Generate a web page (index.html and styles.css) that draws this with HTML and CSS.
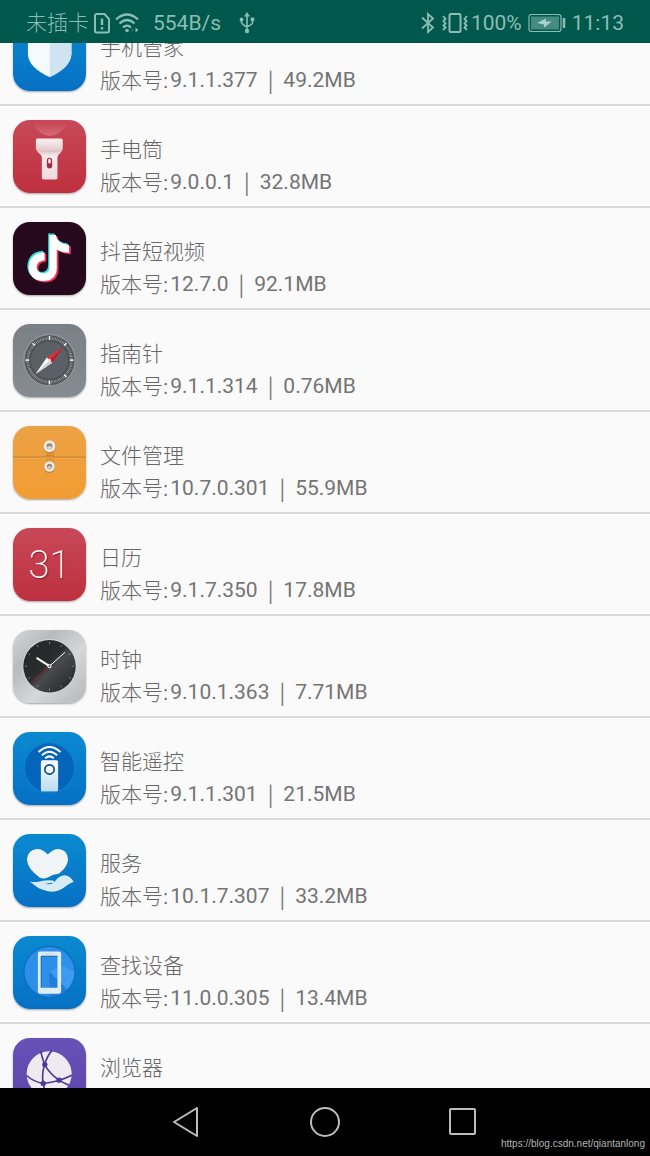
FILE: index.html
```html
<!DOCTYPE html>
<html lang="zh-CN">
<head>
  <meta charset="UTF-8" />
  <meta name="viewport" content="width=device-width, initial-scale=1.0"/>
  <title>应用列表</title>
  <link rel="stylesheet" href="styles.css">
</head>
<body>

<header class="status-bar">
  <div class="status-left">
    <span class="cjk">未插卡</span>
    <svg class="sim" width="18" height="22" viewBox="0 0 18 22" fill="none" stroke="currentColor" stroke-width="2">
      <path d="M4 2H11.500L16 7V19Q16 20.500 14.500 20.500H3.500Q2 20.500 2 19V3.500Q2 2 4 2Z"/>
      <path d="M9 6.500V13M9 15V17.500" stroke-width="2.400"/>
    </svg>
    <svg class="wifi" width="26" height="22" viewBox="0 0 26 22" fill="none" stroke="currentColor" stroke-width="2.200">
      <path d="M1 7.500Q12 -2.500 23 7.500M4.500 11.500Q12 4.500 19.500 11.500M8 15.500Q12 11.500 16 15.500"/>
      <circle cx="12" cy="18.500" r="1.800" fill="currentColor" stroke="none"/>
      <path d="M18 16V20L16.500 18Z" fill="currentColor" stroke="none" opacity="0.400"/>
      <path d="M20.500 15.500V20.500L23.500 18Z" fill="currentColor" stroke="none"/>
    </svg>
    <span class="speed">554B/s</span>
    <svg class="usb" width="16" height="22" viewBox="0 0 16 22" fill="none" stroke="currentColor" stroke-width="1.600">
      <path d="M8 3V19M2.500 7.500V10.500Q2.500 12 8 15M13.500 8V11Q13.500 12.500 8 14.500"/>
      <path d="M8 0L11 4.500H5Z" fill="currentColor" stroke="none"/>
      <circle cx="8" cy="19" r="2.200" fill="currentColor" stroke="none"/>
      <circle cx="2.500" cy="7.500" r="1.900" fill="currentColor" stroke="none"/>
      <path d="M11.700 5.500H15.300V9H11.700Z" fill="currentColor" stroke="none"/>
    </svg>
  </div>
  <div class="status-right">
    <svg width="14" height="22" viewBox="0 0 14 22" fill="none" stroke="currentColor" stroke-width="1.800">
      <path d="M1 5.500L12 15.500L7 20V2L12 6.500L1 16.500"/>
    </svg>
    <svg class="vibrate" width="28" height="22" viewBox="0 0 28 22" fill="none" stroke="currentColor" stroke-width="2">
      <rect x="8.500" y="2" width="11" height="18" rx="1.500"/>
      <path d="M2 4L4.500 7L2.500 9L4.500 11.500L2.500 13.500L4.500 15.500L2 18M26 4L23.500 7L25.500 9L23.500 11.500L25.500 13.500L23.500 15.500L26 18" stroke-width="1.800"/>
    </svg>
    <span>100%</span>
    <svg class="battery" width="38" height="20" viewBox="0 0 38 20" fill="none" stroke="currentColor">
      <rect x="1" y="1.500" width="32" height="17" rx="2.500" stroke-width="1.200"/>
      <rect x="3" y="3.500" width="28" height="13" fill="#468b80" stroke="none"/>
      <path d="M9 10L18 5.500V8.500H24L16 14.500V11.500Z" fill="#a9d2cb" stroke="none"/>
      <path d="M36 5V15" stroke-width="2.500"/>
    </svg>
    <span>11:13</span>
  </div>
</header>

<main class="app-view">
  <ul class="app-list">
    <li class="app-row">
      <div class="app-icon blue">
        <svg viewBox="39 56 220 220">
          <path d="M150 70L84 94V165Q86 205 149 234Q212 205 215 165V94Z" fill="#f5fafd"/>
          <path d="M150 70V234Q212 205 215 165V94Z" fill="#cfe3f1"/>
        </svg>
      </div>
      <div class="app-info">
        <div class="app-name">手机管家</div>
        <div class="app-meta"><span class="cjk">版本号:</span><span>9.1.1.377</span><span class="bar">|</span><span>49.2MB</span></div>
      </div>
    </li>
    <li class="app-row">
      <div class="app-icon red">
        <svg viewBox="39 46 220 220">
          <defs>
            <linearGradient id="torch" x1="0" y1="0" x2="0" y2="1">
              <stop offset="0" stop-color="#fbf1f1"/><stop offset="0.320" stop-color="#e3c8cc"/>
              <stop offset="0.420" stop-color="#f6eaec"/><stop offset="1" stop-color="#f4dadd"/>
            </linearGradient>
            <linearGradient id="beam" x1="0" y1="0" x2="0" y2="1">
              <stop offset="0" stop-color="#c84858"/><stop offset="1" stop-color="#d86a76"/>
            </linearGradient>
          </defs>
          <path d="M96 56Q120 94 150 94T204 56Z" fill="url(#beam)"/>
          <path d="M113 102H184Q189 102 189 108V130Q188 142 176 151L173 158V220Q173 225 168 225H131Q126 225 126 220V158L123 151Q109 142 108 130V108Q108 102 113 102Z" fill="url(#torch)"/>
          <path d="M109 135Q149 145 188 135" fill="none" stroke="#ddbcc1" stroke-width="2"/>
          <rect x="141" y="160" width="16" height="32" rx="8" fill="#a12d3b"/>
          <rect x="145" y="163" width="8" height="14" rx="4" fill="#f6e3e5"/>
        </svg>
      </div>
      <div class="app-info">
        <div class="app-name">手电筒</div>
        <div class="app-meta"><span class="cjk">版本号:</span><span>9.0.0.1</span><span class="bar">|</span><span>32.8MB</span></div>
      </div>
    </li>
    <li class="app-row">
      <div class="app-icon dark">
        <svg viewBox="39 36 220 220">
          <defs>
            <path id="note" d="M149 75H168Q172 102 208 105V129Q187 129 171 119V173Q170 213 131 214Q88 212 86 172Q89 130 134 127V151Q112 153 110 171Q112 190 130 191Q148 190 149 171Z"/>
          </defs>
          <use href="#note" x="5" y="4" fill="#f8345b"/>
          <use href="#note" x="-4" y="-4" fill="#2cdedb"/>
          <use href="#note" fill="#fff"/>
        </svg>
      </div>
      <div class="app-info">
        <div class="app-name">抖音短视频</div>
        <div class="app-meta"><span class="cjk">版本号:</span><span>12.7.0</span><span class="bar">|</span><span>92.1MB</span></div>
      </div>
    </li>
    <li class="app-row">
      <div class="app-icon slate">
        <svg viewBox="39 36 220 220">
          <circle cx="149" cy="145" r="80" fill="#8b9197"/>
          <circle cx="149" cy="145" r="75" fill="#4c5156"/>
          <circle cx="149" cy="145" r="66" fill="none" stroke="#b9bdc0" stroke-width="9" stroke-dasharray="1.500 3.100"/>
          <circle cx="149" cy="145" r="56" fill="#5b6066"/>
          <path d="M149 72V84M149 206V218M76 145H88M210 145H222M98 94L105 101M193 189L200 196M200 94L193 101" stroke="#fff" stroke-width="4"/>
          <path d="M190 106L141 137L157 153Z" fill="#df3236"/>
          <path d="M190 106L149 145L157 153Z" fill="#b91e26"/>
          <path d="M107 187L141 137L157 153Z" fill="#fff"/>
          <path d="M107 187L149 145L157 153Z" fill="#cfd2d4"/>
          <circle cx="149" cy="145" r="4" fill="#e8dede"/>
        </svg>
      </div>
      <div class="app-info">
        <div class="app-name">指南针</div>
        <div class="app-meta"><span class="cjk">版本号:</span><span>9.1.1.314</span><span class="bar">|</span><span>0.76MB</span></div>
      </div>
    </li>
    <li class="app-row">
      <div class="app-icon orange">
        <svg viewBox="39 36 220 220">
          <path d="M39 130H132L139 126H159L166 130H259" fill="none" stroke="#bd7528" stroke-width="3"/>
          <path d="M39 133H259" stroke="#f5b55f" stroke-width="2"/>
          <path d="M142 112V146M148 112V146M154 112V146M160 112V146" stroke="#c7812f" stroke-width="2"/>
          <circle cx="149" cy="99" r="19" fill="#b9772f"/>
          <circle cx="149" cy="97" r="18" fill="#eeeae0"/>
          <circle cx="149" cy="97" r="9" fill="#8c8b80"/>
          <path d="M141 101A9 9 0 0 0 157 101Q149 92 141 101Z" fill="#ded3bd"/>
          <circle cx="149" cy="160" r="17" fill="#b9772f"/>
          <circle cx="149" cy="158" r="16" fill="#eeeae0"/>
          <circle cx="149" cy="158" r="8" fill="#8c8b80"/>
          <path d="M142 161A8 8 0 0 0 156 161Q149 153 142 161Z" fill="#ded3bd"/>
        </svg>
      </div>
      <div class="app-info">
        <div class="app-name">文件管理</div>
        <div class="app-meta"><span class="cjk">版本号:</span><span>10.7.0.301</span><span class="bar">|</span><span>55.9MB</span></div>
      </div>
    </li>
    <li class="app-row">
      <div class="app-icon red calendar">31</div>
      <div class="app-info">
        <div class="app-name">日历</div>
        <div class="app-meta"><span class="cjk">版本号:</span><span>9.1.7.350</span><span class="bar">|</span><span>17.8MB</span></div>
      </div>
    </li>
    <li class="app-row">
      <div class="app-icon silver">
        <svg viewBox="39 40 220 220">
          <defs>
            <linearGradient id="dial" x1="0" y1="0" x2="1" y2="1">
              <stop offset="0" stop-color="#242526"/><stop offset="0.450" stop-color="#2a2b2d"/>
              <stop offset="0.550" stop-color="#4a4b4d"/><stop offset="1" stop-color="#1f2021"/>
            </linearGradient>
          </defs>
          <circle cx="149" cy="149" r="82" fill="#d3d4d5"/>
          <circle cx="149" cy="149" r="79" fill="url(#dial)"/>
          <path d="M149 75V82M149 216V223M75 149H82M216 149H223M112 85L115 91M186 85L183 91M85 112L91 115M213 112L207 115M85 186L91 183M213 186L207 183M112 213L115 207M186 213L183 207" stroke="#a5a6a7" stroke-width="2"/>
          <path d="M149 149L98 197" stroke="#9b2428" stroke-width="3"/>
          <path d="M149 149L196 107" stroke="#fff" stroke-width="3"/>
          <path d="M149 149L110 124" stroke="#fff" stroke-width="6"/>
          <circle cx="149" cy="149" r="6" fill="#fff"/>
          <circle cx="149" cy="149" r="3" fill="#47484a"/>
        </svg>
      </div>
      <div class="app-info">
        <div class="app-name">时钟</div>
        <div class="app-meta"><span class="cjk">版本号:</span><span>9.10.1.363</span><span class="bar">|</span><span>7.71MB</span></div>
      </div>
    </li>
    <li class="app-row">
      <div class="app-icon blue">
        <svg viewBox="39 38 220 220">
          <defs>
            <linearGradient id="remote" x1="0" y1="0" x2="0" y2="1">
              <stop offset="0" stop-color="#fff"/><stop offset="1" stop-color="#b7dcf0"/>
            </linearGradient>
          </defs>
          <circle cx="149" cy="146" r="78" fill="#0f7fd0"/>
          <circle cx="149" cy="146" r="74" fill="#0464b7"/>
          <path d="M116 98Q149 68 182 98M126 108Q149 87 172 108M136 117Q149 106 162 117" fill="none" stroke="#fff" stroke-width="6"/>
          <rect x="123" y="123" width="52" height="94" rx="5" fill="url(#remote)"/>
          <circle cx="149" cy="151" r="14" fill="#f1f8fc" stroke="#0c4a85" stroke-width="5"/>
        </svg>
      </div>
      <div class="app-info">
        <div class="app-name">智能遥控</div>
        <div class="app-meta"><span class="cjk">版本号:</span><span>9.1.1.301</span><span class="bar">|</span><span>21.5MB</span></div>
      </div>
    </li>
    <li class="app-row">
      <div class="app-icon blue">
        <svg viewBox="39 38 220 220">
          <path d="M144 100Q129 82 109 83Q83 87 81 114Q82 142 120 170Q132 175 145 168Q160 159 177 158Q204 137 205 114Q202 85 177 83Q158 83 144 100Z" fill="#f0f4f7"/>
          <path d="M89 181Q100 184 116 182Q132 175 160 178Q166 182 160 185L135 188Q155 193 165 181Q177 163 194 162Q211 162 222 182Q208 187 196 197Q177 212 154 212Q126 208 110 197Q98 187 89 181Z" fill="#d5ebf6"/>
        </svg>
      </div>
      <div class="app-info">
        <div class="app-name">服务</div>
        <div class="app-meta"><span class="cjk">版本号:</span><span>10.1.7.307</span><span class="bar">|</span><span>33.2MB</span></div>
      </div>
    </li>
    <li class="app-row">
      <div class="app-icon blue">
        <svg viewBox="39 37 220 220">
          <circle cx="149" cy="145" r="79" fill="#0b6fc0"/>
          <circle cx="149" cy="145" r="75" fill="#2d8fe8"/>
          <path d="M149 145L202 198A75 75 0 0 0 224 145L184 125Z" fill="#3c9af0"/>
          <path d="M149 145L202 198A75 75 0 0 1 149 220Z" fill="#1f7dd8"/>
          <path fill-rule="evenodd" d="M120 84H177Q184 84 184 90V204Q184 211 177 211H120Q114 211 114 204V90Q114 84 120 84ZM124 98V193H173V98Z" fill="#deedf5"/>
          <path d="M124 193V98H173" fill="none" stroke="#1360a5" stroke-width="3"/>
          <path d="M137 91H161" stroke="#a4c5da" stroke-width="2"/>
        </svg>
      </div>
      <div class="app-info">
        <div class="app-name">查找设备</div>
        <div class="app-meta"><span class="cjk">版本号:</span><span>11.0.0.305</span><span class="bar">|</span><span>13.4MB</span></div>
      </div>
    </li>
    <li class="app-row">
      <div class="app-icon purple">
        <svg viewBox="39 343 220 220">
          <circle cx="148" cy="451" r="68" fill="#edebef"/>
          <g fill="none" stroke="#4b3994" stroke-width="5">
            <path d="M122 383Q127 401 134 423Q151 452 178 470Q190 478 207 485"/>
            <path d="M156 381Q142 397 134 423Q125 452 130 480Q134 504 145 520"/>
            <path d="M80 456Q101 475 130 480"/>
            <path d="M130 480Q180 474 216 455"/>
          </g>
          <g fill="#4b3994">
            <circle cx="135" cy="423" r="8"/>
            <circle cx="178" cy="470" r="8"/>
            <circle cx="130" cy="480" r="8"/>
          </g>
        </svg>
      </div>
      <div class="app-info">
        <div class="app-name">浏览器</div>
      </div>
    </li>
  </ul>
</main>

<nav class="nav-bar">
  <button type="button" aria-label="返回">
    <svg width="30" height="32" viewBox="0 0 30 32"><path d="M2 16L25 2V30Z"/></svg>
  </button>
  <button type="button" aria-label="主页">
    <svg width="30" height="32" viewBox="0 0 30 32"><circle cx="15" cy="16" r="14"/></svg>
  </button>
  <button type="button" aria-label="最近任务">
    <svg width="30" height="32" viewBox="0 0 30 32"><rect x="2" y="3" width="25" height="25" rx="1"/></svg>
  </button>
  <span class="watermark">https://blog.csdn.net/qiantanlong</span>
</nav>

</body>
</html>
```
FILE: styles.css
```css
* {
  box-sizing: border-box;
}

body {
  margin: 0;
  height: 100vh;
  display: flex;
  flex-direction: column;
  background: #fafafa;
  font-family: Roboto, "Noto Sans CJK SC", sans-serif;
  font-size: 21px;
  color: #747474;
}

.cjk,
.app-name {
  font-family: "Noto Sans CJK SC", sans-serif;
  font-weight: 300;
}

/* status bar */
.status-bar {
  height: 43px;
  flex: none;
  display: flex;
  justify-content: space-between;
  align-items: center;
  padding: 2px 26px 0;
  background: #00574b;
  color: #8cbdb5;
  line-height: 32px;
  z-index: 1;
}

.status-left,
.status-right {
  display: flex;
  align-items: center;
}

.status-left .cjk {
  line-height: 36px;
  padding-bottom: 4px;
}

.sim {
  margin-left: 4px;
}

.wifi {
  margin-left: 4px;
}

.speed {
  margin-left: 12px;
}

.usb {
  margin-left: 18px;
}

.vibrate {
  margin: 0 2px 0 6px;
}

.battery {
  margin: 0 6px;
}

/* app list */
.app-view {
  flex: 1;
  min-height: 0;
  overflow: hidden;
}

/* list is scrolled a little under the status bar */
.app-list {
  list-style: none;
  margin: -39px 0 0;
  padding: 0;
}

.app-row {
  height: 102px;
  display: flex;
  gap: 14px;
  padding: 14px 13px 0;
  border-bottom: 2px solid #dadada;
}

.app-icon {
  width: 73px;
  height: 73px;
  flex: none;
  border-radius: 17px;
  overflow: hidden;
  box-shadow: 0 1px 2px rgba(0,0,0,0.35);
}

.app-icon svg {
  display: block;
}

.blue {
  background: linear-gradient(#0a8ad0, #0670c4);
}

.red {
  background: linear-gradient(#c84858, #be303f);
}

.dark {
  background: #27091d;
}

.slate {
  background: linear-gradient(#7b8086, #868b91);
}

.orange {
  background: linear-gradient(#eba245, #f29c33);
}

.silver {
  background: linear-gradient(135deg, #d5d6d7, #b9babc 30%, #d6d7d8 60%, #b5b6b8);
}

.purple {
  background: linear-gradient(#6852b8, #5a44a8);
}

.calendar {
  color: #fff;
  font-size: 38px;
  font-weight: 200;
  line-height: 74px;
  text-align: center;
  text-shadow: 1px 1px 1px rgba(90,10,20,0.6);
}

.app-info {
  padding-top: 12px;
  white-space: nowrap;
}

.app-name {
  line-height: 32px;
  color: #666;
}

.app-meta {
  display: flex;
  line-height: 36px;
}

.app-meta .cjk {
  margin-right: 2px;
  line-height: 34px;
  color: #666;
}

.bar {
  margin: 0 10px;
  font-family: "Noto Sans CJK SC", sans-serif;
  line-height: 34px;
}

/* navigation keys */
.nav-bar {
  height: 68px;
  flex: none;
  display: flex;
  justify-content: center;
  align-items: center;
  gap: 108px;
  background: #000;
  position: relative;
}

.nav-bar button {
  width: 30px;
  height: 32px;
  padding: 0;
  border: none;
  background: none;
  cursor: pointer;
}

.nav-bar svg {
  display: block;
  fill: none;
  stroke: #bdbdbd;
  stroke-width: 2;
  stroke-linejoin: round;
}

.watermark {
  position: absolute;
  right: 5px;
  bottom: 4px;
  font: 10px/16px "Liberation Sans", Arial, sans-serif;
  color: #b4b4b4;
}
```
